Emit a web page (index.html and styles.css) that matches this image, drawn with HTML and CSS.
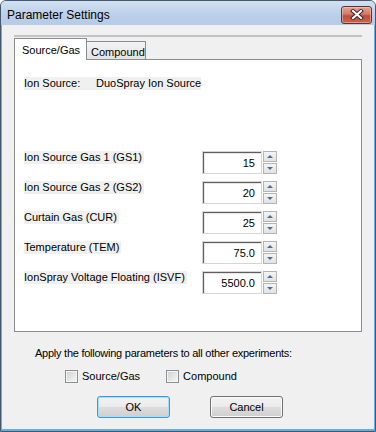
FILE: index.html
```html
<!DOCTYPE html>
<html lang="en">
<head>
  <meta charset="UTF-8">
  <title>Parameter Settings</title>
  <link rel="stylesheet" href="styles.css">
</head>
<body>
  <div class="window">
    <div class="titlebar">
      <span class="title">Parameter Settings</span>
      <button class="close" title="Close">
        <svg width="14" height="11" viewBox="0 0 14 11">
          <path d="M3 2 L11 9 M11 2 L3 9" stroke="#3a2a28" stroke-width="4" stroke-linecap="square"/>
          <path d="M3 2 L11 9 M11 2 L3 9" stroke="#ffffff" stroke-width="2" stroke-linecap="square"/>
        </svg>
      </button>
    </div>

    <div class="content">
      <div class="separator"></div>

      <div class="tabs">
        <div class="tab active">Source/Gas</div>
        <div class="tab">Compound</div>
      </div>

      <div class="panel">
        <div class="source-row">
          <span class="label">Ion Source:</span>
          <span class="label source-name">DuoSpray Ion Source</span>
        </div>

        <div class="params">
          <span class="label">Ion Source Gas 1 (GS1)</span>
          <div class="spin">
            <div class="field">15</div>
            <div class="arrows">
              <span class="arrow up"></span>
              <span class="arrow down"></span>
            </div>
          </div>

          <span class="label">Ion Source Gas 2 (GS2)</span>
          <div class="spin">
            <div class="field">20</div>
            <div class="arrows">
              <span class="arrow up"></span>
              <span class="arrow down"></span>
            </div>
          </div>

          <span class="label">Curtain Gas (CUR)</span>
          <div class="spin">
            <div class="field">25</div>
            <div class="arrows">
              <span class="arrow up"></span>
              <span class="arrow down"></span>
            </div>
          </div>

          <span class="label">Temperature (TEM)</span>
          <div class="spin">
            <div class="field">75.0</div>
            <div class="arrows">
              <span class="arrow up"></span>
              <span class="arrow down"></span>
            </div>
          </div>

          <span class="label">IonSpray Voltage Floating (ISVF)</span>
          <div class="spin">
            <div class="field">5500.0</div>
            <div class="arrows">
              <span class="arrow up"></span>
              <span class="arrow down"></span>
            </div>
          </div>
        </div>
      </div>

      <p class="apply">Apply the following parameters to all other experiments:</p>

      <div class="checks">
        <label class="check"><span class="box"></span>Source/Gas</label>
        <label class="check"><span class="box"></span>Compound</label>
      </div>

      <div class="buttons">
        <button class="btn default">OK</button>
        <button class="btn">Cancel</button>
      </div>
    </div>
  </div>
</body>
</html>
```

FILE: styles.css
```css
body {
  margin: 0;
  padding: 0;
  font-family: 'Liberation Sans', Arial, sans-serif;
  font-size: 11px;
  color: #000;
  background: #ffffff;
}

.window {
  width: 376px;
  height: 432px;
  box-sizing: border-box;
  border: 1px solid #44586f;
  border-radius: 6px 6px 0 0;
  background: #b9cde7;
  display: flex;
  flex-direction: column;
  overflow: hidden;
}

/* title bar */
.titlebar {
  height: 24px;
  flex: none;
  display: flex;
  align-items: center;
  padding: 0 3px 0 6px;
  background: linear-gradient(to bottom, #d2e0f1, #bccfe8 60%, #b6cbe6);
}

.title {
  font-size: 12px;
  margin-top: 3px;
}

.close {
  margin-left: auto;
  margin-top: 3px;
  width: 31px;
  height: 18px;
  padding: 0;
  border: 1px solid #5a3530;
  border-radius: 3px;
  background: linear-gradient(to bottom, #e4a394, #d17a66 45%, #c04e39 55%, #c8644f);
  box-shadow: inset 0 0 0 1px rgba(255, 220, 210, 0.45);
  display: flex;
  align-items: center;
  justify-content: center;
}

/* client area */
.content {
  flex: 1;
  background: #f0f0f0;
  border: 1px solid #63aee2;
  border-top: none;
  border-bottom-width: 2px;
}

.separator {
  height: 2px;
  margin: 10px 12px 0 12px;
  background: #c3c3c3;
}

.tabs {
  display: flex;
  align-items: flex-end;
  margin: 1px 12px -1px 12px;
  position: relative;
  z-index: 1;
}

.tab {
  height: 18px;
  width: 59px;
  box-sizing: border-box;
  border: 1px solid #898c95;
  border-bottom: none;
  border-left: none;
  padding: 3px 0 0 4px;
  margin-bottom: 1px;
  background: linear-gradient(to bottom, #f3f3f3, #e3e3e3);
  line-height: 14px;
  white-space: nowrap;
}

.tab.active {
  height: 22px;
  width: 73px;
  border-left: 1px solid #898c95;
  padding: 4px 0 0 7px;
  margin-bottom: 0;
  background: #ffffff;
}

.panel {
  margin: 0 12px;
  height: 273px;
  box-sizing: border-box;
  border: 1px solid #898c95;
  background: #ffffff;
  padding: 17px 0 0 9px;
}

.label {
  background: #f0f0f0;
  line-height: 13px;
  height: 13px;
  white-space: nowrap;
}

.source-row {
  display: flex;
}

.source-row .label:first-child {
  width: 72px;
}

.params {
  display: grid;
  grid-template-columns: 178px auto;
  row-gap: 7px;
  align-items: start;
  margin-top: 61px;
}

.params .label {
  justify-self: start;
  padding-right: 2px;
}

.spin {
  display: flex;
  gap: 1px;
}

.field {
  width: 60px;
  height: 23px;
  box-sizing: border-box;
  border: 1px solid #d6d6d6;
  box-shadow: inset 1px 1px 0 #5f5f5f, inset 2px 2px 0 #e6e6e6;
  background: #ffffff;
  text-align: right;
  padding: 5px 6px 0 0;
  line-height: 13px;
}

.arrows {
  display: flex;
  flex-direction: column;
  gap: 1px;
}

.arrow {
  width: 14px;
  height: 11px;
  box-sizing: border-box;
  border: 1px solid #b4b4b4;
  background: linear-gradient(to bottom, #f5f5f5, #e2e2e2);
  display: flex;
  align-items: center;
  justify-content: center;
}

.arrow::after {
  content: '';
  width: 0;
  height: 0;
  border-left: 3px solid transparent;
  border-right: 3px solid transparent;
}

.arrow.up::after {
  border-bottom: 3px solid #4c6c9c;
}

.arrow.down::after {
  border-top: 3px solid #4c6c9c;
}

/* bottom part */
.apply {
  margin: 15px 0 0 33px;
  line-height: 13px;
  letter-spacing: -0.25px;
}

.checks {
  display: flex;
  margin: 10px 0 0 63px;
}

.check {
  display: flex;
  align-items: center;
  gap: 4px;
  line-height: 13px;
}

.check + .check {
  margin-left: 26px;
}

.box {
  width: 13px;
  height: 13px;
  box-sizing: border-box;
  border: 1px solid #8e8f8f;
  background: linear-gradient(135deg, #cdd0d4, #f7f7f7);
  box-shadow: inset 0 0 0 1px #f4f4f4;
}

.buttons {
  display: flex;
  gap: 40px;
  margin: 13px 0 0 95px;
}

.btn {
  width: 73px;
  height: 22px;
  padding: 0;
  border: 1px solid #707070;
  border-radius: 3px;
  background: linear-gradient(to bottom, #f2f2f2, #ebebeb 50%, #dddddd 51%, #cfcfcf);
  box-shadow: inset 0 0 0 1px #fbfbfb;
  font-family: 'Liberation Sans', Arial, sans-serif;
  font-size: 11px;
  color: #000;
}

.btn.default {
  border-color: #3c9ad8;
  box-shadow: inset 0 0 0 1px #a6dcf7;
}
```
